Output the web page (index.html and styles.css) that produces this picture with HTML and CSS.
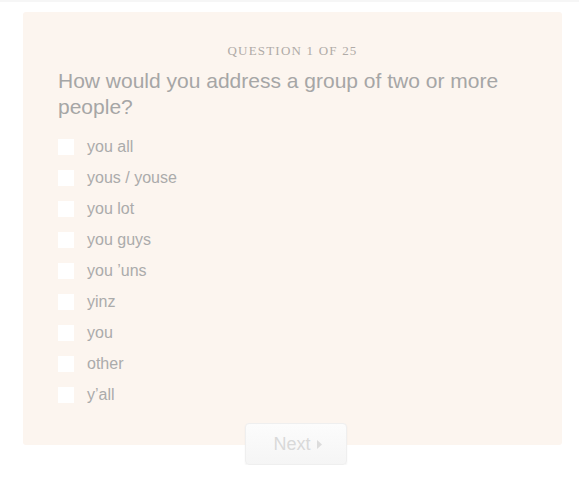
FILE: index.html
```html
<!DOCTYPE html>
<html>
<head>
<meta charset="utf-8">
<link rel="stylesheet" href="styles.css">
</head>
<body>
<div class="page">
  <div class="card">
    <div class="label">Question 1 of 25</div>
    <div class="question">How would you address a group of two or more people?</div>
    <ul class="options">
      <li><span class="box"></span><span class="opt">you all</span></li>
      <li><span class="box"></span><span class="opt">yous / youse</span></li>
      <li><span class="box"></span><span class="opt">you lot</span></li>
      <li><span class="box"></span><span class="opt">you guys</span></li>
      <li><span class="box"></span><span class="opt">you ’uns</span></li>
      <li><span class="box"></span><span class="opt">yinz</span></li>
      <li><span class="box"></span><span class="opt">you</span></li>
      <li><span class="box"></span><span class="opt">other</span></li>
      <li><span class="box"></span><span class="opt">y’all</span></li>
    </ul>
  </div>
  <div class="actions">
    <button class="next">Next<svg class="arrow" width="5" height="9" viewBox="0 0 5 9"><path d="M0 0 L5 4.5 L0 9 Z" fill="#dcdcdc"/></svg></button>
  </div>
</div>
</body>
</html>
```

FILE: styles.css
```css
html, body {
  margin: 0;
  padding: 0;
  background: #ffffff;
}
body {
  font-family: "Liberation Sans", Arial, sans-serif;
  border-top: 2px solid #f6f6f6;
}
.page {
  padding: 10px 17px 0 23px;
}
.card {
  background: #fcf5ef;
  border-radius: 3px;
  padding: 32px 35px 44px 35px;
  height: 357px;
}
.label {
  font-family: "Liberation Serif", "Times New Roman", serif;
  font-size: 13px;
  letter-spacing: 1.2px;
  text-transform: uppercase;
  color: #b0aba7;
  text-align: center;
  line-height: 14px;
}
.question {
  margin-top: 10px;
  font-size: 21px;
  line-height: 26px;
  color: #a6a6a6;
  font-weight: 300;
}
.options {
  list-style: none;
  margin: 11px 0 0 0;
  padding: 0;
}
.options li {
  display: flex;
  align-items: center;
  height: 31px;
}
.box {
  width: 16px;
  height: 16px;
  background: #ffffff;
  flex: none;
}
.opt {
  margin-left: 13px;
  font-size: 16px;
  color: #ababab;
}
.actions {
  display: flex;
  justify-content: center;
  margin-top: -22px;
}
.next {
  width: 102px;
  height: 42px;
  border: 1px solid #efefef;
  border-radius: 4px;
  background: linear-gradient(#fcfcfc, #f5f5f5);
  box-shadow: 0 1px 2px rgba(0,0,0,0.06);
  font-family: "Liberation Sans", Arial, sans-serif;
  font-size: 18px;
  color: #d9d9d9;
  display: flex;
  align-items: center;
  justify-content: center;
  gap: 6px;
  padding: 0 0 0 4px;
  margin-left: 6px;
}
```
